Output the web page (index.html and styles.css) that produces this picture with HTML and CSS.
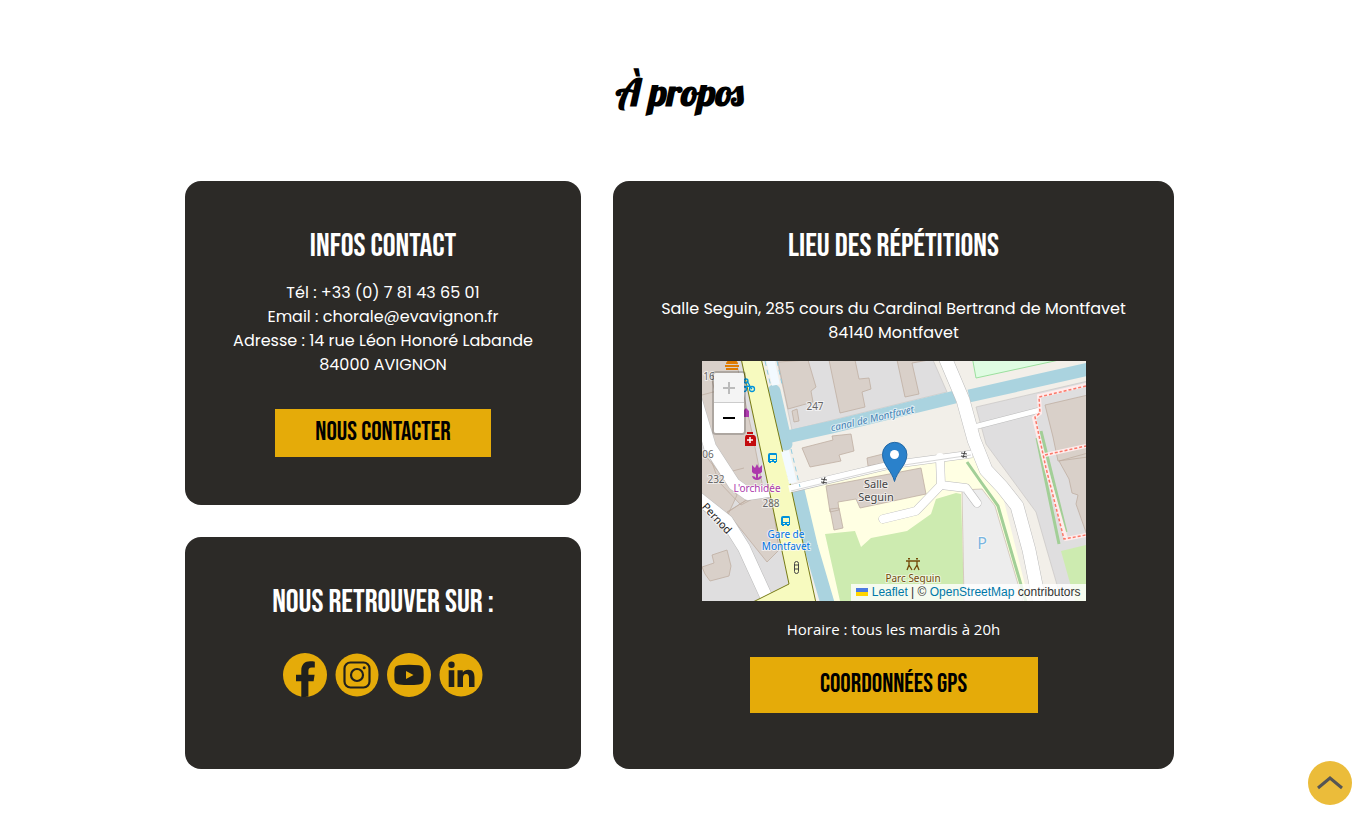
FILE: index.html
```html
<!DOCTYPE html>
<html lang="fr">
<head>
<meta charset="utf-8">
<meta name="viewport" content="width=device-width, initial-scale=1">
<title>À propos</title>
<link rel="stylesheet" href="styles.css">
</head>
<body>
<main class="about">
  <h1 class="title">À propos</h1>
  <div class="columns">
    <div class="side">
      <section class="card contact">
        <h2>INFOS CONTACT</h2>
        <address>Tél : +33 (0) 7 81 43 65 01<br>Email : chorale@evavignon.fr<br>Adresse : 14 rue Léon Honoré Labande<br>84000 AVIGNON</address>
        <a class="button" href="#contact">NOUS CONTACTER</a>
      </section>
      <section class="card social">
        <h2>NOUS RETROUVER SUR :</h2>
        <nav class="networks" aria-label="Réseaux sociaux">
          <a href="#facebook" aria-label="Facebook"><svg viewBox="0 0 44 44"><circle cx="22" cy="22" r="22" fill="#e5ab09"/><path fill="#20201d" d="M18.300 44V28.200H13V21.700h5.300v-4.200c0-6 3.500-9.200 8.800-9.200 2 0 3.400.1 4.700.4v5.800h-2.900c-2.900 0-3.500 1.500-3.500 3.600v3.600h6.200l-1 6.500h-5.200V43.500a22 22 0 0 1-7.100.5z"/></svg></a>
          <a href="#instagram" aria-label="Instagram"><svg viewBox="0 0 44 44"><circle cx="22" cy="22" r="21.500" fill="#e5ab09"/><g fill="none" stroke="#20201d" stroke-width="2.200"><rect x="9.500" y="9.500" width="25" height="25" rx="6"/><circle cx="22" cy="22" r="6"/></g><circle cx="29.200" cy="14.800" r="1.500" fill="#20201d"/></svg></a>
          <a href="#youtube" aria-label="YouTube"><svg viewBox="0 0 44 44"><circle cx="22" cy="22" r="22" fill="#e5ab09"/><path fill="#20201d" d="M12 12.300q10-1 20 0 4.200.3 4.500 4.500.4 5 0 10-.3 4.400-4.500 4.800-10 1-20 0-4.200-.4-4.500-4.800-.4-5 0-10 .3-4.200 4.500-4.500z"/><path fill="#e5ab09" d="M19 18l7.500 4-7.500 4z"/></svg></a>
          <a href="#linkedin" aria-label="LinkedIn"><svg viewBox="0 0 44 44"><circle cx="22" cy="22" r="21.500" fill="#e5ab09"/><g fill="#20201d"><circle cx="12.500" cy="11.800" r="3.200"/><path d="M9.700 17.300h5.600V34H9.700zM18.500 17.300h5.300v2.300c1.200-1.900 3-2.800 5.500-2.800 4.600 0 6.200 3 6.200 7.500V34H30v-8.700c0-2.600-.5-4.200-2.800-4.200-2.400 0-3.200 1.700-3.200 4.200V34h-5.500z"/></g></svg></a>
        </nav>
      </section>
    </div>
    <section class="card place">
      <h2>LIEU DES RÉPÉTITIONS</h2>
      <p class="where">Salle Seguin, 285 cours du Cardinal Bertrand de Montfavet<br>84140 Montfavet</p>
      <div class="map">
        <svg class="tiles" viewBox="701 361 384 240" role="img" aria-label="Carte de la salle Seguin">
          <path fill="#f2efe9" d="M701 361h384v240H701z"/>
          <g fill="#dfdedf" stroke="#c9c6c4" stroke-width=".7">
            <path d="M700 360h40l26 120 23 105-38 17h-51zM776 360h156l14 32-155 38zM975 407l112-26v221h-26l-16-55-10-35-50-68z"/>
          </g>
          <path fill="#ffffe3" d="M790 492l70-19 112-17 28 33 28 112H833L800 500z"/>
          <path fill="#cdebb0" d="M824 534l30-3 6 16 10-9 36-7 24-17 5-15 20-6 5 1 3 107H839zM1060 551l25-6v56h-11z"/>
          <path fill="#ededed" stroke="#c9b9ac" stroke-width=".7" d="M961 490l20-1 13 17 28 95h-59z"/>
          <path fill="#dffce2" stroke="#9bdf9e" d="M971 356l4 22 120-26"/>
          <g fill="none" stroke="#aad3df">
            <path stroke-width="13" stroke-linecap="round" d="M773 391l12 53"/><path stroke-width="13" d="M786 437l45-10 123-30M968 396l120-27"/>
            <path stroke-width="14" d="M796 488l14 59 17 58"/>
          </g>
          <g fill="#d9d0c9" stroke="#bfaea2" stroke-width=".8">
            <path d="M700 360h35l17 77 11 56-23 12-22-23-18-50zM700 450l36 45-11 24-25-24zM726 512l28-17 17 4 7 51-12 12zM701 567l12-4-2-8 15-5 4 16-2 10-19 5-5-7zM777 362l10 47 25-7-2-11 5-4-8-27zM828 360l11 53 25-6-3-15 9-3-2-11-10 1-4-19zM896 360l8 37 14-3-7-31 17-3zM791 411l5-2 2 12-5 1zM801 448l31-8-1-4 19-2 3 17-15 4 2 6-31 6zM866 458l16-4 2 9-17 3zM825 486l95-18 5 26-66 14-4-9-18 3 1 8-9 2zM829 509l9-1 4 20-9 2zM1044 405l43-10v62l-30 4-5-24zM1058 461l29-8v85l-12-34 2-9-6-2-3-14z"/>
            <path fill="none" d="M709 373l12 45M701 395l15-4M716 475l27-7M727 512l38-25"/>
          </g>
          <g stroke="#a2cf97" stroke-width="3" fill="none"><path d="M966 462l14 20 17 24 28 96M1036 438l22 106M1040 431l25 101"/></g>
          <g fill="none" stroke-linejoin="round" stroke="#bbb">
            <path stroke-width="14" d="M943 355l19 45 11 40 12 30 16 17 15 19 12 44 11 55"/>
            <path stroke-width="6" d="M973 427l66-17"/>
            <path stroke-width="13" d="M695 400l14 47 24 37 14 10 34-5M697 498l29 23 17 27 26 57"/>
            <path stroke-width="8" d="M785 490l104-25 82-11"/>
            <path stroke-width="9" stroke-linecap="round" d="M939 459l1 26-25 26-33 8M940 485l25 3 11 15"/>
          </g>
          <g fill="none" stroke="#fff" stroke-linejoin="round">
            <path stroke-width="13" d="M943 355l19 45 11 40 12 30 16 17 15 19 12 44 11 55"/>
            <path stroke-width="5" d="M973 427l66-17"/>
            <path stroke-width="12" d="M695 400l14 47 24 37 14 10 34-5M697 498l29 23 17 27 26 57"/>
          </g>
          <path fill="#f7fabf" stroke="#777b16" d="M740 358l26 122 22 104-38 19h65l-25-115-30-130z"/>
          <g fill="none" stroke="#fff" stroke-linejoin="round"><path stroke-width="7" d="M788 489l101-24 82-11"/><path stroke-width="8" stroke-linecap="round" d="M939 457l1 28-25 26-33 8M940 485l25 3 11 15"/></g>
          <path stroke="#bbb" fill="none" stroke-width=".6" d="M790 491l100-24 80-12"/>
          <path fill="none" stroke="#f3faff" stroke-width="8" d="M769 358l6 27M784 451l8 32"/>
          <path fill="none" stroke="#8fcbe0" stroke-dasharray="5 4" d="M764 361l6 26M776 361l5 23M790 449l9 38"/>
          <path fill="none" stroke="#ffecec" stroke-width="4" d="M1085 385l-47 11 1 17-6 5 12 50 20 71 20-4M1044 455l41-9"/>
          <path fill="none" stroke="#fa7869" stroke-width="1.500" stroke-dasharray="3 2" d="M1085 386l-47 11 1 16-5 4 11 51 18 71 22-4M1044 455l41-9"/>
          <g fill="#df7b00"><path d="M725 364q0-4 6-4t6 4zM724 365h14v2h-14zM725 368h12v2h-12z"/></g>
          <g fill="none" stroke="#0092da" stroke-width="1.300"><circle cx="743" cy="389" r="2.500"/><circle cx="751" cy="389" r="2.500"/><path d="M743 387l5-1 3 3M746 381l3 5"/><circle cx="745" cy="381" r="2"/></g>
          <path fill="#ac39ac" d="M742 417v-6l3-3 3 3v6zM751 465l3 3 2-4 2 4 3-3v7q-2 2-4 2v4q1-2 4-2-1 4-5 4-4 0-5-4 3 0 4 2v-4q-3 0-4-2z"/>
          <path fill="#c30b0e" d="M746 432h6v2h-6zM745 435h8q2 1 2 3v8h-11v-8q0-2 1-3z"/><path stroke="#fff" stroke-width="1.500" d="M749 437v6m-3-3h6"/>
          <g fill="#0092da"><path fill-rule="evenodd" d="M769 453h6q1 0 1 2v7h-1v1h-2v-1h-3v1h-2v-1h-1v-7q0-2 2-2zm0 2v4h6v-4zm0 5v1h2v-1zm4 0v1h2v-1zM782 516h6q1 0 1 2v7h-1v1h-2v-1h-3v1h-2v-1h-1v-7q0-2 2-2zm0 2v4h6v-4zm0 5v1h2v-1zm4 0v1h2v-1z"/></g>
          <g fill="none" stroke="#444"><rect x="793.500" y="561.500" width="4" height="12" rx="2"/><path d="M794 565h3m-3 4h3M820 479l6 1m-6 2 6 1m-2-6-2 7M960 453l6 1m-6 2 6 1m-2-6-2 7"/></g>
          <g stroke="#734a08" stroke-width="1.300" fill="none"><path d="M905 561h14M908 561v4l-2 5m2-5 3 5M916 561v4l-3 5m3-5 2 5"/><path d="M908 558v1.500m8-1.500v1.500" stroke-width="2"/></g>
          <g class="map-text" text-anchor="middle">
            <g fill="#666"><text x="708" y="380">16</text><text x="814" y="410">247</text><text x="707" y="458">06</text><text x="715" y="483">232</text><text x="770" y="507">288</text></g>
            <text x="756" y="492" fill="#ac39ac">L'orchidée</text>
            <g fill="#0073e6"><text x="785" y="538">Gare de</text><text x="785" y="550">Montfavet</text></g>
            <g fill="#444"><text x="875" y="488" class="room">Salle</text><text x="875" y="501" class="room">Seguin</text></g>
            <text x="912" y="582" fill="#734a08">Parc Seguin</text>
            <text transform="translate(872 422) rotate(-13)" fill="#4683b5" font-style="italic">canal de Montfavet</text>
            <text transform="translate(713 521) rotate(47)" fill="#222" class="room">Pernod</text>
            <text x="981" y="549" fill="#7bb5df" class="parking">P</text>
          </g>
          <path fill="#2a81cb" stroke="#2268a5" d="M893.500 481.500C891 471 881.500 465 881.500 454.500a12.200 12.200 0 0 1 24.400 0c0 10.500-9.900 16.500-12.400 27z"/><circle cx="893.500" cy="454.500" r="4.500" fill="#fff"/>
        </svg>
        <div class="zoom"><button disabled aria-label="Zoom avant"><svg viewBox="0 0 12 12"><path d="M0 6h12M6 0v12"/></svg></button><button aria-label="Zoom arrière"><svg viewBox="0 0 12 12"><path d="M0 6h12"/></svg></button></div>
        <div class="credit"><a href="#leaflet"><svg viewBox="0 0 12 8"><path fill="#4c7be1" d="M0 0h12v4H0z"/><path fill="#ffd500" d="M0 4h12v4H0z"/></svg> Leaflet</a> | © <a href="#osm">OpenStreetMap</a> contributors</div>
      </div>
      <p class="hours">Horaire : tous les mardis à 20h</p>
      <a class="button gps" href="#gps">COORDONNÉES GPS</a>
    </section>
  </div>
</main>
<a class="top" href="#" aria-label="Haut de page"><svg viewBox="0 0 26 14"><path d="M1 12L13 2l12 10"/></svg></a>
</body>
</html>
```
FILE: styles.css
```css
* { box-sizing: border-box; }
body { margin: 0; padding-right: 5px; background: #fff; font-family: Poppins, Inter, sans-serif; font-size: 16px; line-height: 24px; }
.about { max-width: 989px; margin: 0 auto; padding: 64px 0 46px; }
.title { margin: 0 0 61px; font: bold 38px/56px Lobster, "Liberation Serif", serif; text-align: center; }
.columns { display: grid; grid-template-columns: 396fr 561fr; gap: 32px; }
.side { display: flex; flex-direction: column; gap: 32px; }
.card { background: #2c2a27; color: #fff; border-radius: 16px; padding: 48px; text-align: center; display: flex; flex-direction: column; align-items: center; }
.contact { padding-inline: 32px; }
.social { flex: 1; }
h2 { margin: 0; font: normal 32px/36px "Bebas Neue", "Liberation Sans Narrow", "Liberation Sans", sans-serif; }
address { margin-top: 16px; font-style: normal; }
.button { display: inline-block; margin-top: 32px; padding: 0 40px; background: #e5ab09; color: #000; text-decoration: none; font: normal 26px/48px "Bebas Neue", "Liberation Sans Narrow", "Liberation Sans", sans-serif; }
.networks { display: flex; gap: 8px; margin-top: 32px; }
.networks a { display: block; width: 44px; height: 44px; }
.networks svg { display: block; }
.where { margin: 32px 0 16px; }
.map { position: relative; width: 100%; max-width: 384px; overflow: hidden; }
.tiles { display: block; width: 100%; }
.map-text { font-family: "Noto Sans", sans-serif; font-size: 10px; paint-order: stroke; stroke: #ffffff99; stroke-width: 2px; }
.room { font-size: 11px; }
.parking { font-size: 16px; }
.zoom { position: absolute; top: 10px; left: 10px; border: 2px solid #0003; border-radius: 4px; overflow: hidden; background-clip: padding-box; }
.zoom button { display: flex; align-items: center; justify-content: center; width: 30px; height: 30px; padding: 0; border: 0; background: #fff; color: #000; }
.zoom button:disabled { background: #f4f4f4; color: #bbb; border-bottom: 1px solid #ccc; }
.zoom svg { width: 12px; fill: none; stroke: currentColor; stroke-width: 2; }
.credit { position: absolute; right: 0; bottom: 0; padding: 0 5px; background: #fffc; color: #333; font: 12px/17px "Liberation Sans", sans-serif; white-space: nowrap; }
.credit a { color: #0078a8; text-decoration: none; }
.credit svg { width: 12px; height: 8px; }
.hours { margin: 16px 0; font-family: "Segoe UI", "Open Sans", sans-serif; font-size: 15px; }
.gps { margin: 0 0 8px; width: 288px; max-width: 100%; line-height: 56px; }
.top { position: fixed; right: 12px; bottom: 10px; width: 44px; height: 44px; border-radius: 50%; background: #ebbc3a; display: grid; place-items: center; }
.top svg { width: 26px; fill: none; stroke: #555; stroke-width: 3; }
```
